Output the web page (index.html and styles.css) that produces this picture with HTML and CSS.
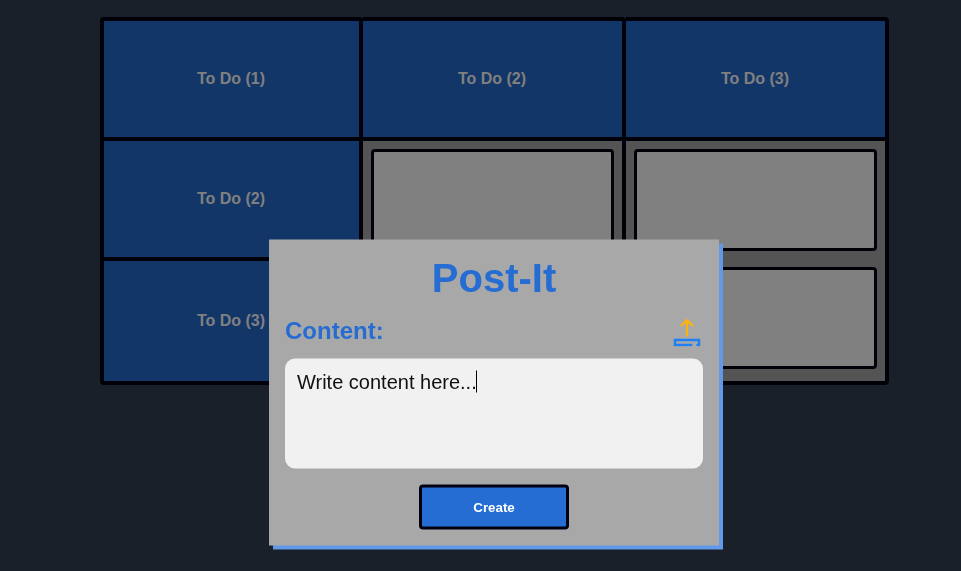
FILE: index.html
```html
<!DOCTYPE html>
<html lang="en">
<head>
<meta charset="utf-8">
<title>Post-It Board</title>
<link rel="stylesheet" href="styles.css">
</head>
<body>
<main class="board">
  <div class="label">To Do (1)</div>
  <div class="label notched">To Do (2)</div>
  <div class="label notched">To Do (3)</div>
  <div class="label">To Do (2)</div>
  <div class="column"><div class="card"></div><div class="card"></div></div>
  <div class="column"><div class="card"></div><div class="card"></div></div>
  <div class="label label-last">To Do (3)</div>
</main>
<section class="modal" role="dialog">
  <h1 class="title">Post-It</h1>
  <div class="row">
    <h2 class="subtitle">Content:</h2>
    <svg class="upload" width="32" height="32" viewBox="0 0 32 32" fill="none" stroke-width="2.200" stroke-linecap="round" stroke-linejoin="round">
      <path stroke="#ffb20d" d="M16 21V6M10.500 11L16 5.600L21.500 11"/>
      <path stroke="#1f80f5" stroke-width="2.500" stroke-linejoin="miter" d="M20.200 30.500H4V25.500H28V30.500H26.500"/>
    </svg>
  </div>
  <div class="content">Write content here...<span class="caret"></span></div>
  <button class="create">Create</button>
</section>
</body>
</html>
```
FILE: styles.css
```css
* { box-sizing: border-box; }
html, body { height: 100%; }
body {
  margin: 0;
  padding: 17px 0 0 100px;
  overflow: hidden;
  background: #1a2029;
  font-family: "Liberation Sans", Arial, sans-serif;
}
.board {
  width: 789px;
  display: grid;
  grid-template-columns: 255px 259px 259px;
  grid-template-rows: 116px 116px 120px;
  gap: 4px;
  border: 4px solid #000008;
  border-radius: 4px;
  background: #000008;
}
.label {
  position: relative;
  display: flex;
  align-items: center;
  justify-content: center;
  padding-right: 1px;
  background: #133668;
  color: #808080;
  font-size: 16px;
  font-weight: bold;
}
.notched::before {
  content: "";
  position: absolute;
  left: -2px;
  top: -4px;
  border: 1px solid transparent;
  border-top: 2px solid #1a2029;
  border-bottom: 0;
}
.column {
  grid-row: 2 / 4;
  display: flex;
  flex-direction: column;
  gap: 16px;
  padding: 8px;
  background: #545454;
}
.label-last { grid-column: 1; grid-row: 3; }
.card {
  height: 102px;
  border: 3px solid #000008;
  border-radius: 4px;
  background: #808080;
}
.modal {
  position: fixed;
  left: 494px;
  top: 393px;
  width: 450px;
  height: 306px;
  transform: translate(-50%, calc(-50% - 0.5px));
  display: flex;
  flex-direction: column;
  align-items: center;
  padding: 15px 16px 16px;
  background: #a8a8a8;
  box-shadow: 4px 4px 0 #6199e8;
}
.title {
  margin: 0;
  color: #256dd2;
  font-size: 40px;
  line-height: 46px;
}
.row {
  width: 100%;
  height: 32px;
  margin-top: 14px;
  display: flex;
  align-items: center;
  justify-content: space-between;
}
.subtitle { margin: 0; color: #256dd2; font-size: 24px; line-height: 28px; }
.upload { display: block; }
.content {
  width: 100%;
  height: 110px;
  margin-top: 12px;
  padding: 12px;
  border-radius: 10px;
  background: #f1f1f1;
  color: #111;
  font-size: 20px;
  line-height: 23px;
}
.caret {
  display: inline-block;
  width: 1px;
  height: 22px;
  margin-left: -1px;
  vertical-align: -4px;
  background: #000;
}
.create {
  width: 150px;
  height: 45px;
  margin-top: 16px;
  border: 3px solid #000010;
  border-radius: 4px;
  background: #256dd2;
  color: #fff;
  font: bold 13.333px "Liberation Sans", Arial, sans-serif;
}
```
